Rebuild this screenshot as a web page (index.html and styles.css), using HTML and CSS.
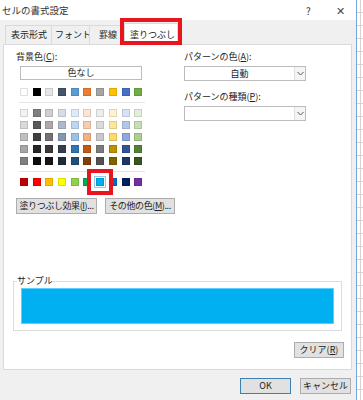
FILE: index.html
```html
<!DOCTYPE html>
<html>
<head>
  <meta charset="utf-8">
  <title>セルの書式設定</title>
  <link rel="stylesheet" href="styles.css">
</head>
<body>
  <div class="screen">
    <div class="dialog">
      <div class="titlebar">
        <span class="title">セルの書式設定</span>
        <span class="help">?</span>
        <span class="close">✕</span>
      </div>

      <div class="tabs">
        <div class="tab">表示形式</div>
        <div class="tab">フォント</div>
        <div class="tab">罫線</div>
        <div class="tab active">塗りつぶし</div>
        <div class="mark mark-tab"></div>
      </div>

      <div class="panel">
        <div class="cols">
          <div class="col-left">
            <div class="label">背景色(<u>C</u>):</div>
            <button class="btn wide">色なし</button>

            <div class="swatches" id="themeRow"></div>
            <div class="sep"></div>
            <div class="swatches shades" id="shadeRows"></div>
            <div class="sep"></div>
            <div class="swatches std" id="stdRow"></div>

            <div class="btn-row">
              <button class="btn">塗りつぶし効果(<u>I</u>)...</button>
              <button class="btn">その他の色(<u>M</u>)...</button>
            </div>
          </div>

          <div class="col-right">
            <div class="label">パターンの色(<u>A</u>):</div>
            <div class="select"><span class="value">自動</span><span class="arrow"><svg width="7" height="5" viewBox="0 0 7 5"><path d="M0.5 1 L3.5 4 L6.5 1" fill="none" stroke="#555" stroke-width="1"/></svg></span></div>
            <div class="label second">パターンの種類(<u>P</u>):</div>
            <div class="select"><span class="value"></span><span class="arrow"><svg width="7" height="5" viewBox="0 0 7 5"><path d="M0.5 1 L3.5 4 L6.5 1" fill="none" stroke="#555" stroke-width="1"/></svg></span></div>
          </div>
        </div>

        <fieldset class="sample">
          <legend>サンプル</legend>
          <div class="sample-fill"></div>
        </fieldset>

        <div class="clear-row">
          <button class="btn small">クリア(<u>R</u>)</button>
        </div>
      </div>

      <div class="footer">
        <button class="btn foot ok">OK</button>
        <button class="btn foot">キャンセル</button>
      </div>
    </div>
    <div class="sheet"></div>
  </div>

<script>
  // テーマの色
  const theme = ['#ffffff', '#000000', '#e7e6e6', '#44546a', '#5b9bd5', '#ed7d31', '#a5a5a5', '#ffc000', '#4472c4', '#70ad47'];
  const shades = [
    ['#f2f2f2', '#7f7f7f', '#d0cece', '#d6dce4', '#ddebf7', '#fce4d6', '#ededed', '#fff2cc', '#d9e1f2', '#e2efda'],
    ['#d9d9d9', '#595959', '#aeaaaa', '#adb9ca', '#bdd7ee', '#f8cbad', '#dbdbdb', '#ffe699', '#b4c6e7', '#c6e0b4'],
    ['#bfbfbf', '#404040', '#757171', '#8497b0', '#9bc2e6', '#f4b084', '#c9c9c9', '#ffd966', '#8ea9db', '#a9d08e'],
    ['#a6a6a6', '#262626', '#3a3838', '#333f4f', '#2f75b5', '#c65911', '#7b7b7b', '#bf8f00', '#305496', '#548235'],
    ['#808080', '#0d0d0d', '#161616', '#222b35', '#1f4e78', '#833c0c', '#525252', '#806000', '#203764', '#375623']
  ];
  const standard = ['#c00000', '#ff0000', '#ffc000', '#ffff00', '#92d050', '#00b050', '#00b0f0', '#0070c0', '#002060', '#7030a0'];

  function addSwatches(el, colors, selected) {
    colors.forEach((c, i) => {
      const s = document.createElement('div');
      s.className = 'sw';
      s.style.background = c;
      if (i === selected) {
        s.classList.add('selected');
        const m = document.createElement('div');
        m.className = 'mark mark-sw';
        s.appendChild(m);
      }
      el.appendChild(s);
    });
  }

  addSwatches(document.getElementById('themeRow'), theme, -1);
  shades.forEach(row => addSwatches(document.getElementById('shadeRows'), row, -1));
  addSwatches(document.getElementById('stdRow'), standard, 6);
</script>
</body>
</html>
```

FILE: styles.css
```css
* {
  margin: 0;
  padding: 0;
  box-sizing: border-box;
}

body {
  font-family: 'Noto Sans CJK JP', 'Noto Sans', sans-serif;
  font-size: 9px;
  color: #222;
  background: #fff;
  width: 363px;
  height: 400px;
  overflow: hidden;
  white-space: nowrap;
}

u {
  text-decoration: underline;
}

.screen {
  display: flex;
  height: 400px;
}

.dialog {
  width: 357px;
  height: 400px;
  flex-shrink: 0;
  background: #f0f0f0;
  border-right: 1px solid #7aa7d8;
  display: flex;
  flex-direction: column;
}

.sheet {
  flex: 1;
  background-color: #fff;
  background-image:
    linear-gradient(to right, transparent 3px, #d4d4d4 3px, #d4d4d4 4px, transparent 4px),
    repeating-linear-gradient(to bottom, transparent 0, transparent 12px, #d4d4d4 12px, #d4d4d4 13px);
}

/* タイトル */
.titlebar {
  height: 20px;
  flex-shrink: 0;
  background: #fff;
  display: flex;
  align-items: center;
  padding-left: 2px;
  font-size: 9.5px;
  color: #333;
}

.title {
  flex: 1;
}

.help {
  width: 30px;
  font-size: 10px;
}

.close {
  width: 20px;
  font-size: 11px;
  color: #444;
}

/* タブ */
.tabs {
  position: relative;
  height: 24px;
  flex-shrink: 0;
  display: flex;
  align-items: flex-end;
  padding-left: 5px;
}

.tab {
  height: 19px;
  line-height: 18px;
  padding: 0 4px;
  border: 1px solid #dadada;
  border-bottom: none;
  margin-right: -1px;
  background: #f0f0f0;
  color: #222;
}

.tab:nth-child(1) { width: 47px; padding-left: 5px; }
.tab:nth-child(2) { width: 39px; padding-left: 3px; }
.tab:nth-child(3) { width: 36px; padding-left: 9px; }

.tab.active {
  width: 54px;
  height: 22px;
  line-height: 21px;
  background: #fff;
  padding-left: 5px;
  position: relative;
  z-index: 1;
  margin-bottom: -1px;
}

.mark {
  position: absolute;
  border: 4px solid #e8141e;
  z-index: 2;
}

.mark-tab {
  left: 120px;
  top: -2px;
  width: 62px;
  height: 27px;
}

/* パネル */
.panel {
  height: 326px;
  flex-shrink: 0;
  margin: 0 4px 0 3px;
  background: #fff;
  border: 1px solid #dadada;
  padding: 6px 6px 0 12px;
}

.cols {
  display: flex;
  height: 223px;
}

.col-left {
  width: 168px;
}

.col-right {
  width: 140px;
}

.label {
  line-height: 12px;
  height: 12px;
}

.label.second {
  margin-top: 10px;
}

.btn {
  font-family: inherit;
  font-size: 9px;
  color: #222;
  background: #e1e1e1;
  border: 1px solid #adadad;
  height: 16px;
  line-height: 14px;
  padding: 0 2px;
  white-space: nowrap;
  cursor: pointer;
}

.btn-row .btn {
  letter-spacing: -0.4px;
}

.btn.wide {
  display: block;
  width: 122px;
  height: 14px;
  line-height: 12px;
  margin: 3px 0 0 4px;
  background: #fff;
  border-color: #bcbcbc;
}

.swatches {
  display: grid;
  grid-template-columns: repeat(10, 8px);
  column-gap: 4.7px;
  row-gap: 4px;
  margin-left: 4px;
}

#themeRow {
  margin-top: 8px;
}

.sep {
  width: 126px;
  height: 1px;
  background: #e3e3e3;
  margin: 6px 0 6px 3px;
}

.sw {
  width: 8px;
  height: 8px;
  border: 1px solid rgba(0, 0, 0, 0.12);
  position: relative;
}

.sw.selected {
  outline: 1px solid #fff;
  box-shadow: 0 0 0 2px #9ac8e8;
}

.mark-sw {
  left: -10px;
  top: -10px;
  width: 26px;
  height: 26px;
}

.btn-row {
  display: flex;
  gap: 8px;
  margin-top: 12px;
}

.btn-row .btn:first-child {
  width: 81px;
}

.btn-row .btn:last-child {
  width: 70px;
}

.select {
  display: flex;
  width: 122px;
  height: 15px;
  margin-top: 3px;
  border: 1px solid #bcbcbc;
  background: #fff;
}

.select .value {
  flex: 1;
  text-align: center;
  line-height: 13px;
}

.select .arrow {
  width: 11px;
  border-left: 1px solid #e0e0e0;
  background: #f4f4f4;
  display: flex;
  align-items: center;
  justify-content: center;
}

/* サンプル */
.sample {
  margin: 1px 3px 0 -3px;
  border: 1px solid #dcdcdc;
  padding: 1px 7px 6px 7px;
}

.sample legend {
  margin-left: -4px;
  padding: 0;
  line-height: 12px;
}

.sample-fill {
  height: 36px;
  background: #00b0f0;
  border: 1px solid #5cd0f8;
}

.clear-row {
  display: flex;
  justify-content: flex-end;
  margin-top: 11px;
  padding-right: 1px;
}

.btn.small {
  width: 50px;
}

/* フッター */
.footer {
  flex: 1;
  display: flex;
  justify-content: flex-end;
  gap: 9px;
  padding: 8px 5px 0 0;
}

.btn.foot {
  width: 51px;
  height: 16px;
}

.btn.ok {
  border-color: #3c7fb1;
}
```
